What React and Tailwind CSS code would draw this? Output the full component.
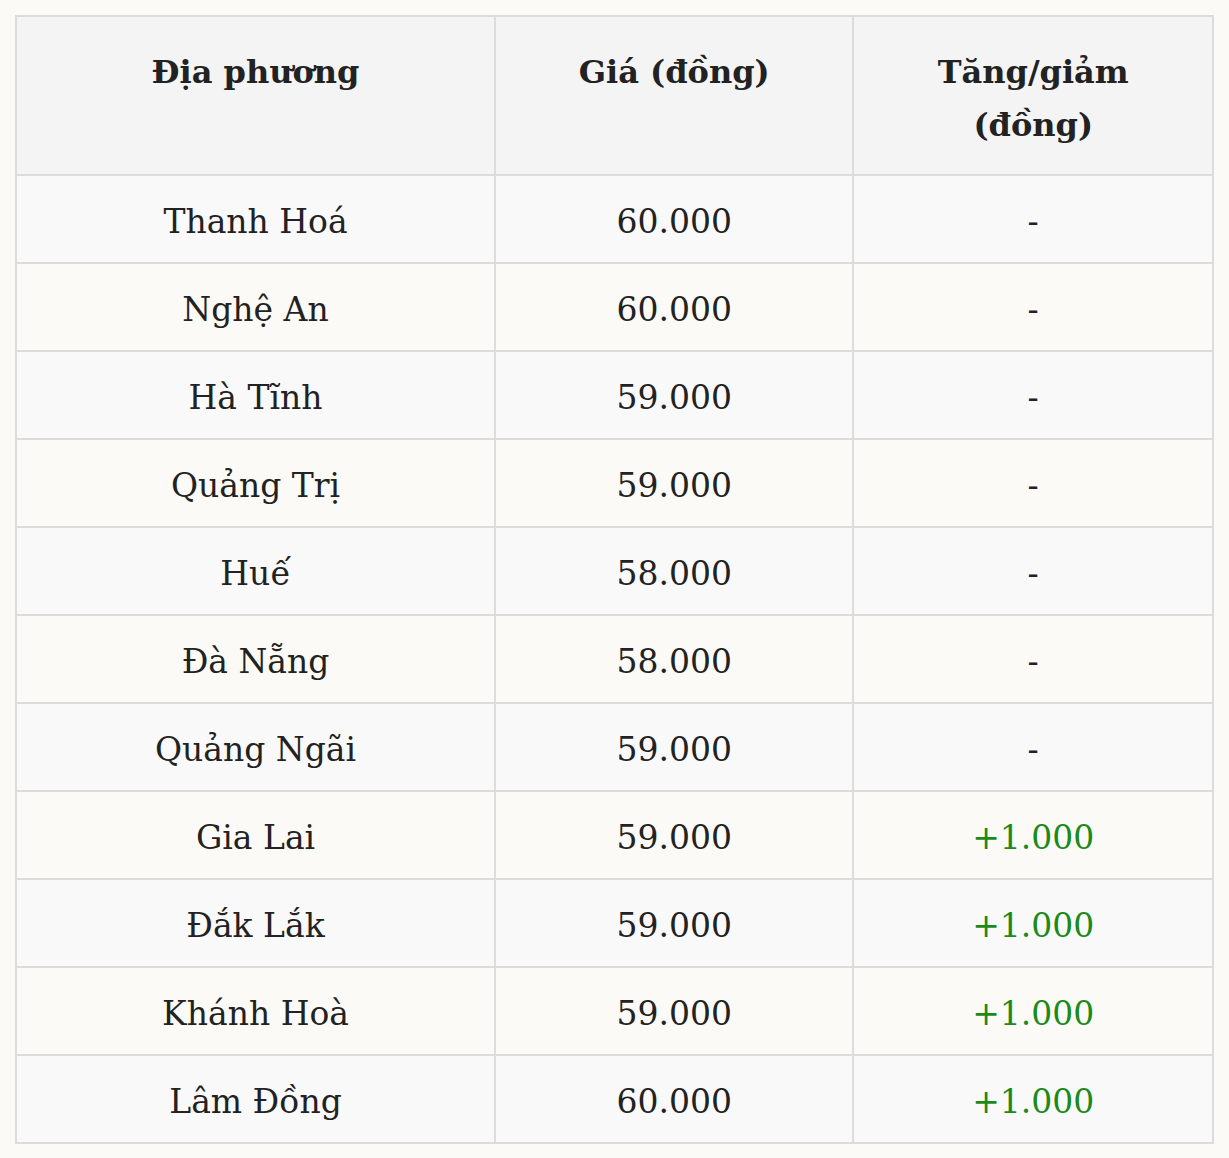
import React from 'react';

const rows = [
  ['Thanh Hoá', '60.000', '-'],
  ['Nghệ An', '60.000', '-'],
  ['Hà Tĩnh', '59.000', '-'],
  ['Quảng Trị', '59.000', '-'],
  ['Huế', '58.000', '-'],
  ['Đà Nẵng', '58.000', '-'],
  ['Quảng Ngãi', '59.000', '-'],
  ['Gia Lai', '59.000', '+1.000'],
  ['Đắk Lắk', '59.000', '+1.000'],
  ['Khánh Hoà', '59.000', '+1.000'],
  ['Lâm Đồng', '60.000', '+1.000'],
];

const PriceTable = () => {
  return (
    <div className="min-h-[1158px] bg-[#fbfaf7] px-[15px] pt-[15px] font-['DejaVu_Serif',serif] text-[#222]">
      <table className="w-[1199px] border-collapse border-2 border-[#dcdcdc] text-center">
        <colgroup>
          <col className="w-[480px]" />
          <col className="w-[359px]" />
          <col className="w-[360px]" />
        </colgroup>
        <thead>
          <tr className="bg-[#f4f4f4]">
            <th className="h-[159px] border-2 border-[#dcdcdc] px-4 pt-[29px] pb-[22px] align-top text-[32px] leading-[53px] font-bold">
              Địa phương
            </th>
            <th className="h-[159px] border-2 border-[#dcdcdc] px-4 pt-[29px] pb-[22px] align-top text-[32px] leading-[53px] font-bold">
              Giá (đồng)
            </th>
            <th className="h-[159px] border-2 border-[#dcdcdc] px-4 pt-[29px] pb-[22px] align-top text-[32px] leading-[53px] font-bold">
              Tăng/giảm
              <br />
              (đồng)
            </th>
          </tr>
        </thead>
        <tbody>
          {rows.map(([place, price, change], i) => (
            <tr key={place} className={i % 2 === 0 ? 'bg-[#f9f9f9]' : 'bg-[#fbfaf6]'}>
              <td className="h-[88px] border-2 border-[#dcdcdc] px-4 pt-[6px] text-[33px]">{place}</td>
              <td className="h-[88px] border-2 border-[#dcdcdc] px-4 pt-[6px] text-[33px]">{price}</td>
              <td
                className={
                  change === '-'
                    ? 'h-[88px] border-2 border-[#dcdcdc] px-4 pt-[6px] text-[33px]'
                    : 'h-[88px] border-2 border-[#dcdcdc] px-4 pt-[6px] text-[33px] text-[#1a8a1a]'
                }
              >
                {change}
              </td>
            </tr>
          ))}
        </tbody>
      </table>
    </div>
  );
};

export default PriceTable;
